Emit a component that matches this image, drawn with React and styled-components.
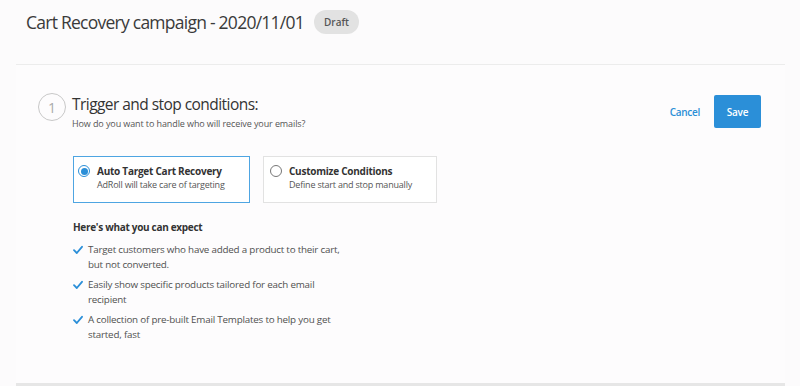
import React from "react";
import styled, { createGlobalStyle } from "styled-components";

const Global = createGlobalStyle`
  html, body { margin: 0; padding: 0; background: #fcfbfc; }
  body { font-family: "Open Sans", "Noto Sans", sans-serif; color: #333; }
  * { box-sizing: border-box; }
`;

const Page = styled.div`
  width: 800px;
  height: 386px;
  display: flex;
  flex-direction: column;
`;

const Header = styled.div`
  height: 64px;
  display: flex;
  align-items: flex-start;
  padding: 10px 0 0 26px;
  gap: 10px;
`;

const Title = styled.h1`
  margin: 0;
  font-size: 17.5px;
  font-weight: 400;
  letter-spacing: -0.75px;
  color: #3a3a3a;
  line-height: 24px;
`;

const Badge = styled.span`
  display: inline-flex;
  align-items: center;
  height: 24px;
  padding: 0 10px;
  border-radius: 12px;
  background: #e2e2e2;
  color: #555;
  font-size: 10px;
  font-weight: 600;
`;

const Card = styled.div`
  margin: 0 15px 0 16px;
  flex: 1;
  background: #fdfcfd;
  border-top: 1px solid #ececec;
  border-bottom: 3px solid #e6e6e6;
  padding: 28px 24px 0 22px;
  display: flex;
  flex-direction: column;
`;

const StepRow = styled.div`
  display: flex;
  align-items: flex-start;
`;

const StepCircle = styled.div`
  width: 28px;
  height: 28px;
  border-radius: 50%;
  border: 1px solid #c8c8c8;
  display: flex;
  align-items: center;
  justify-content: center;
  color: #aaa;
  font-size: 14px;
  margin-right: 6px;
`;

const StepText = styled.div`
  flex: 1;
  padding-top: 1px;
`;

const StepTitle = styled.div`
  font-size: 15.5px;
  letter-spacing: -0.55px;
  color: #333;
  line-height: 20px;
`;

const StepSub = styled.div`
  font-size: 9px;
  letter-spacing: -0.1px;
  color: #555;
  margin-top: 3px;
`;

const Actions = styled.div`
  display: flex;
  align-items: center;
  gap: 14px;
  margin-top: 2px;
`;

const LinkButton = styled.button`
  background: none;
  border: none;
  padding: 0;
  color: #2b8fd6;
  font-family: inherit;
  font-size: 10px;
  font-weight: 600;
  letter-spacing: -0.3px;
`;

const PrimaryButton = styled.button`
  width: 47px;
  height: 33px;
  background: #2b8fd8;
  border: none;
  border-radius: 2px;
  color: #fff;
  font-family: inherit;
  font-size: 10px;
  font-weight: 600;
  letter-spacing: -0.2px;
`;

const Body = styled.div`
  padding-left: 35px;
  margin-top: 26px;
`;

const Options = styled.div`
  display: flex;
  gap: 13px;
`;

const Option = styled.div`
  width: ${(p) => (p.$selected ? "177px" : "174px")};
  height: 47px;
  border: ${(p) => (p.$selected ? "1.5px solid #4ea5e2" : "1px solid #e2e2e2")};
  padding: ${(p) => (p.$selected ? "7px 4px" : "7px 6px")};
  display: flex;
  gap: 7px;
  background: #fff;
`;

const Radio = styled.span`
  width: 12px;
  height: 12px;
  border-radius: 50%;
  flex-shrink: 0;
  margin-top: 1px;
  border: ${(p) => (p.$checked ? "1.5px solid #2b8fd8" : "1px solid #777")};
  display: flex;
  align-items: center;
  justify-content: center;
  &::after {
    content: "";
    width: 7px;
    height: 7px;
    border-radius: 50%;
    background: ${(p) => (p.$checked ? "#2b8fd8" : "transparent")};
  }
`;

const OptText = styled.div`
  display: flex;
  flex-direction: column;
`;

const OptTitle = styled.div`
  font-size: 10px;
  font-weight: 700;
  letter-spacing: -0.25px;
  color: #333;
  line-height: 14px;
`;

const OptSub = styled.div`
  font-size: 9px;
  letter-spacing: -0.2px;
  color: #555;
  line-height: 13px;
`;

const ExpectTitle = styled.div`
  margin-top: 17px;
  font-size: 10px;
  font-weight: 700;
  letter-spacing: -0.3px;
  color: #333;
`;

const List = styled.ul`
  list-style: none;
  margin: 8px 0 0;
  padding: 0;
  width: 275px;
  display: flex;
  flex-direction: column;
  gap: 5px;
`;

const Item = styled.li`
  display: flex;
  gap: 5px;
  font-size: 9.8px;
  letter-spacing: -0.2px;
  line-height: 15px;
  color: #505050;
`;

const Check = () => (
  <svg width="10" height="10" viewBox="0 0 10 10" style={{ flexShrink: 0, marginTop: 3 }}>
    <path d="M1 5.2 L3.8 8 L9 1.8" fill="none" stroke="#2b8fd8" strokeWidth="1.8" strokeLinecap="round" strokeLinejoin="round" />
  </svg>
);

export default function App() {
  const items = [
    "Target customers who have added a product to their cart, but not converted.",
    "Easily show specific products tailored for each email recipient",
    "A collection of pre-built Email Templates to help you get started, fast",
  ];
  return (
    <Page>
      <Global />
      <Header>
        <Title>Cart Recovery campaign - 2020/11/01</Title>
        <Badge>Draft</Badge>
      </Header>
      <Card>
        <StepRow>
          <StepCircle>1</StepCircle>
          <StepText>
            <StepTitle>Trigger and stop conditions:</StepTitle>
            <StepSub>How do you want to handle who will receive your emails?</StepSub>
          </StepText>
          <Actions>
            <LinkButton>Cancel</LinkButton>
            <PrimaryButton>Save</PrimaryButton>
          </Actions>
        </StepRow>
        <Body>
          <Options>
            <Option $selected>
              <Radio $checked />
              <OptText>
                <OptTitle>Auto Target Cart Recovery</OptTitle>
                <OptSub>AdRoll will take care of targeting</OptSub>
              </OptText>
            </Option>
            <Option>
              <Radio />
              <OptText>
                <OptTitle>Customize Conditions</OptTitle>
                <OptSub>Define start and stop manually</OptSub>
              </OptText>
            </Option>
          </Options>
          <ExpectTitle>Here's what you can expect</ExpectTitle>
          <List>
            {items.map((t) => (
              <Item key={t}>
                <Check />
                <span>{t}</span>
              </Item>
            ))}
          </List>
        </Body>
      </Card>
    </Page>
  );
}
